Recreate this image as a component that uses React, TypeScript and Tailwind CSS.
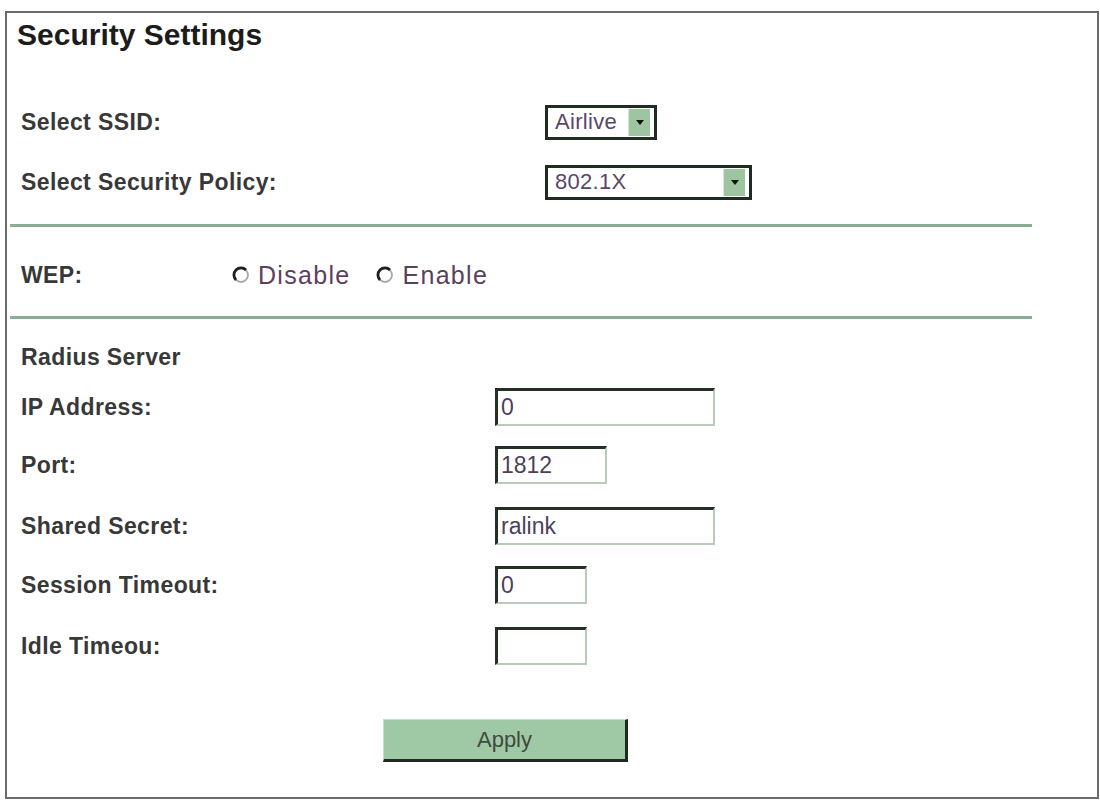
import React from 'react';

const labelCls = 'text-[23px] leading-none font-bold tracking-[0.4px] text-[#383838]';

function FakeSelect({ value, width }: { value: string; width: string }) {
  return (
    <div className={`flex items-center h-[35px] ${width} border-[3px] border-[#1f2d20] bg-white`}>
      <span className="flex-1 pl-[7px] text-[22px] leading-none tracking-[0.3px] text-[#5a4766]">{value}</span>
      <span className="flex items-center justify-center w-[22px] h-[27px] mr-[4px] bg-[#9cc5a0] border-l border-[#d4e8d6]">
        <svg width="8" height="5" viewBox="0 0 8 5">
          <path d="M0 0h8L4 5z" fill="#111" />
        </svg>
      </span>
    </div>
  );
}

function Field({ value, width }: { value: string; width: string }) {
  return (
    <input
      readOnly
      value={value}
      className={`h-[38px] ${width} border-t-[3px] border-l-[3px] border-r-2 border-b-2 border-t-[#253025] border-l-[#253025] border-r-[#b9cbbb] border-b-[#b9cbbb] pl-[3px] text-[23px] leading-none text-[#4d3f5a] bg-white outline-none`}
    />
  );
}

function Radio({ label }: { label: string }) {
  return (
    <div className="flex items-center">
      <svg width="18" height="18" viewBox="0 0 18 18" className="shrink-0">
        <circle cx="9" cy="9" r="7" fill="#fff" stroke="#a8a8a8" strokeWidth="1.8" />
        <path d="M14 4 A7 7 0 0 0 4 14" stroke="#1e1e1e" strokeWidth="2.8" fill="none" />
      </svg>
      <span className="ml-[8px] text-[25px] leading-none tracking-[1.3px] text-[#5a3f5e]">{label}</span>
    </div>
  );
}

const Line = () => <div className="ml-[3px] w-[1022px] h-[3px] bg-[#8bae93]" />;

const inputRows = [
  { label: 'IP Address:', value: '0', width: 'w-[220px]', mt: 'mt-[15px]' },
  { label: 'Port:', value: '1812', width: 'w-[112px]', mt: 'mt-[18px]' },
  { label: 'Shared Secret:', value: 'ralink', width: 'w-[220px]', mt: 'mt-[21px]' },
  { label: 'Session Timeout:', value: '0', width: 'w-[92px]', mt: 'mt-[19px]' },
  { label: 'Idle Timeou:', value: '', width: 'w-[92px]', mt: 'mt-[21px]' },
];

export default function App() {
  return (
    <div className="w-[1100px] h-[801px] bg-white pt-[11px] font-['Liberation_Sans',Arial,sans-serif]">
      <div className="ml-[5px] w-[1094px] h-[788px] border-2 border-[#6b6b6b] flex flex-col">
        <h1 className="mt-[8px] pl-[10px] text-[30px] leading-[28px] font-bold text-[#1c1c1c]">
          Security Settings
        </h1>

        {/* SSID / policy */}
        <div className="mt-[53px] h-[40px] pl-[14px] flex items-center">
          <span className={`w-[524px] ${labelCls}`}>Select SSID:</span>
          <FakeSelect value="Airlive" width="w-[112px]" />
        </div>
        <div className="mt-[20px] h-[40px] pl-[14px] flex items-center">
          <span className={`w-[524px] ${labelCls}`}>Select Security Policy:</span>
          <FakeSelect value="802.1X" width="w-[207px]" />
        </div>

        <div className="mt-[22px]">
          <Line />
        </div>

        {/* WEP */}
        <div className="mt-[28px] h-[40px] pl-[14px] flex items-center">
          <span className={`w-[211px] ${labelCls}`}>WEP:</span>
          <div className="flex items-center gap-[26px]">
            <Radio label="Disable" />
            <Radio label="Enable" />
          </div>
        </div>

        <div className="mt-[21px]">
          <Line />
        </div>

        {/* Radius */}
        <div className="mt-[23px] h-[30px] pl-[14px] flex items-center">
          <span className={labelCls}>Radius Server</span>
        </div>
        {inputRows.map((r) => (
          <div key={r.label} className={`${r.mt} h-[40px] pl-[14px] flex items-center`}>
            <span className={`w-[474px] ${labelCls}`}>{r.label}</span>
            <Field value={r.value} width={r.width} />
          </div>
        ))}

        <div className="mt-[53px] ml-[376px]">
          <button className="w-[245px] h-[43px] bg-[#9fc8a5] border-t border-l border-t-[#c5dfc8] border-l-[#c5dfc8] border-r-[3px] border-b-[3px] border-r-[#1f2a1f] border-b-[#1f2a1f] text-[22px] leading-none text-[#3f4a40]">
            Apply
          </button>
        </div>
      </div>
    </div>
  );
}
